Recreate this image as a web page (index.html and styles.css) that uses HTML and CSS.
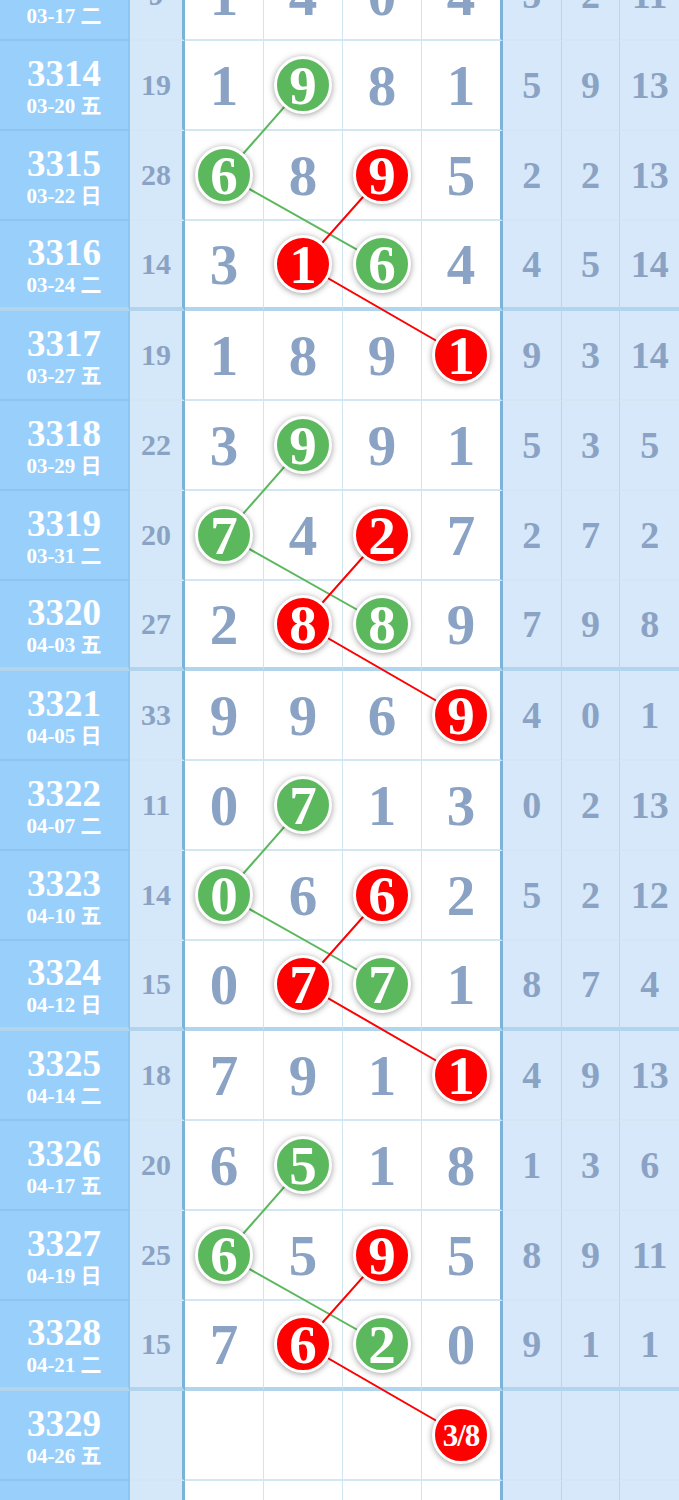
FILE: index.html
```html
<!DOCTYPE html>
<html lang="zh">

<head>
    <meta charset="UTF-8">
    <meta name="viewport" content="width=device-width, initial-scale=1.0">
    <title>走势图</title>
    <link rel="stylesheet" href="styles.css">
</head>

<body>
    <div class="chart">
        <!-- connecting lines, drawn under the balls -->
        <svg class="links" width="679" height="1620">
            <polyline class="green" points="303.5,134 224.5,224 382.5,313" />
            <polyline class="red" points="382.5,224 303.5,313 461,404" />
            <polyline class="green" points="303.5,494 224.5,584 382.5,673" />
            <polyline class="red" points="382.5,584 303.5,673 461,764" />
            <polyline class="green" points="303.5,854 224.5,944 382.5,1033" />
            <polyline class="red" points="382.5,944 303.5,1033 461,1124" />
            <polyline class="green" points="303.5,1214 224.5,1304 382.5,1393" />
            <polyline class="red" points="382.5,1304 303.5,1393 461,1484" />
        </svg>

        <div class="row">
            <div class="issue"><span class="no">3313</span><span class="date">03-17 二</span></div>
            <div class="sum">9</div>
            <div class="num">1</div><div class="num">4</div><div class="num">0</div><div class="num">4</div>
            <div class="stat">5</div><div class="stat">2</div><div class="stat">11</div>
        </div>
        <div class="row">
            <div class="issue"><span class="no">3314</span><span class="date">03-20 五</span></div>
            <div class="sum">19</div>
            <div class="num">1</div><div class="num"><span class="ball green">9</span></div><div class="num">8</div><div class="num">1</div>
            <div class="stat">5</div><div class="stat">9</div><div class="stat">13</div>
        </div>
        <div class="row">
            <div class="issue"><span class="no">3315</span><span class="date">03-22 日</span></div>
            <div class="sum">28</div>
            <div class="num"><span class="ball green">6</span></div><div class="num">8</div><div class="num"><span class="ball red">9</span></div><div class="num">5</div>
            <div class="stat">2</div><div class="stat">2</div><div class="stat">13</div>
        </div>
        <div class="row sep">
            <div class="issue"><span class="no">3316</span><span class="date">03-24 二</span></div>
            <div class="sum">14</div>
            <div class="num">3</div><div class="num"><span class="ball red">1</span></div><div class="num"><span class="ball green">6</span></div><div class="num">4</div>
            <div class="stat">4</div><div class="stat">5</div><div class="stat">14</div>
        </div>
        <div class="row">
            <div class="issue"><span class="no">3317</span><span class="date">03-27 五</span></div>
            <div class="sum">19</div>
            <div class="num">1</div><div class="num">8</div><div class="num">9</div><div class="num"><span class="ball red">1</span></div>
            <div class="stat">9</div><div class="stat">3</div><div class="stat">14</div>
        </div>
        <div class="row">
            <div class="issue"><span class="no">3318</span><span class="date">03-29 日</span></div>
            <div class="sum">22</div>
            <div class="num">3</div><div class="num"><span class="ball green">9</span></div><div class="num">9</div><div class="num">1</div>
            <div class="stat">5</div><div class="stat">3</div><div class="stat">5</div>
        </div>
        <div class="row">
            <div class="issue"><span class="no">3319</span><span class="date">03-31 二</span></div>
            <div class="sum">20</div>
            <div class="num"><span class="ball green">7</span></div><div class="num">4</div><div class="num"><span class="ball red">2</span></div><div class="num">7</div>
            <div class="stat">2</div><div class="stat">7</div><div class="stat">2</div>
        </div>
        <div class="row sep">
            <div class="issue"><span class="no">3320</span><span class="date">04-03 五</span></div>
            <div class="sum">27</div>
            <div class="num">2</div><div class="num"><span class="ball red">8</span></div><div class="num"><span class="ball green">8</span></div><div class="num">9</div>
            <div class="stat">7</div><div class="stat">9</div><div class="stat">8</div>
        </div>
        <div class="row">
            <div class="issue"><span class="no">3321</span><span class="date">04-05 日</span></div>
            <div class="sum">33</div>
            <div class="num">9</div><div class="num">9</div><div class="num">6</div><div class="num"><span class="ball red">9</span></div>
            <div class="stat">4</div><div class="stat">0</div><div class="stat">1</div>
        </div>
        <div class="row">
            <div class="issue"><span class="no">3322</span><span class="date">04-07 二</span></div>
            <div class="sum">11</div>
            <div class="num">0</div><div class="num"><span class="ball green">7</span></div><div class="num">1</div><div class="num">3</div>
            <div class="stat">0</div><div class="stat">2</div><div class="stat">13</div>
        </div>
        <div class="row">
            <div class="issue"><span class="no">3323</span><span class="date">04-10 五</span></div>
            <div class="sum">14</div>
            <div class="num"><span class="ball green">0</span></div><div class="num">6</div><div class="num"><span class="ball red">6</span></div><div class="num">2</div>
            <div class="stat">5</div><div class="stat">2</div><div class="stat">12</div>
        </div>
        <div class="row sep">
            <div class="issue"><span class="no">3324</span><span class="date">04-12 日</span></div>
            <div class="sum">15</div>
            <div class="num">0</div><div class="num"><span class="ball red">7</span></div><div class="num"><span class="ball green">7</span></div><div class="num">1</div>
            <div class="stat">8</div><div class="stat">7</div><div class="stat">4</div>
        </div>
        <div class="row">
            <div class="issue"><span class="no">3325</span><span class="date">04-14 二</span></div>
            <div class="sum">18</div>
            <div class="num">7</div><div class="num">9</div><div class="num">1</div><div class="num"><span class="ball red">1</span></div>
            <div class="stat">4</div><div class="stat">9</div><div class="stat">13</div>
        </div>
        <div class="row">
            <div class="issue"><span class="no">3326</span><span class="date">04-17 五</span></div>
            <div class="sum">20</div>
            <div class="num">6</div><div class="num"><span class="ball green">5</span></div><div class="num">1</div><div class="num">8</div>
            <div class="stat">1</div><div class="stat">3</div><div class="stat">6</div>
        </div>
        <div class="row">
            <div class="issue"><span class="no">3327</span><span class="date">04-19 日</span></div>
            <div class="sum">25</div>
            <div class="num"><span class="ball green">6</span></div><div class="num">5</div><div class="num"><span class="ball red">9</span></div><div class="num">5</div>
            <div class="stat">8</div><div class="stat">9</div><div class="stat">11</div>
        </div>
        <div class="row sep">
            <div class="issue"><span class="no">3328</span><span class="date">04-21 二</span></div>
            <div class="sum">15</div>
            <div class="num">7</div><div class="num"><span class="ball red">6</span></div><div class="num"><span class="ball green">2</span></div><div class="num">0</div>
            <div class="stat">9</div><div class="stat">1</div><div class="stat">1</div>
        </div>
        <div class="row">
            <div class="issue"><span class="no">3329</span><span class="date">04-26 五</span></div>
            <div class="sum"></div>
            <div class="num"></div><div class="num"></div><div class="num"></div><div class="num"><span class="ball red small">3/8</span></div>
            <div class="stat"></div><div class="stat"></div><div class="stat"></div>
        </div>
        <div class="row">
            <div class="issue"><span class="no">3330</span><span class="date">04-28 日</span></div>
            <div class="sum"></div>
            <div class="num"></div><div class="num"></div><div class="num"></div><div class="num"></div>
            <div class="stat"></div><div class="stat"></div><div class="stat"></div>
        </div>
    </div>
</body>

</html>
```

FILE: styles.css
```css
body {
    margin: 0;
    padding: 0;
    background: #ffffff;
    font-family: "Liberation Serif", "Noto Sans CJK SC", serif;
    font-weight: bold;
}

.chart {
    position: relative;
    margin-top: -49px;
    width: 679px;
}

.links {
    position: absolute;
    top: 0;
    left: 0;
    z-index: 1;
    pointer-events: none;
}

.links polyline {
    fill: none;
    stroke-width: 2;
}

.links .green {
    stroke: #5cb85c;
}

.links .red {
    stroke: #ff0000;
}

.row {
    display: grid;
    grid-template-columns: 130px 55px 79px 79px 79px 81px 1fr 1fr 1fr;
    height: 90px;
}

.row > div {
    box-sizing: border-box;
    display: flex;
    align-items: center;
    justify-content: center;
    border-bottom: 2px solid #d2e6f3;
    color: #8aa2c3;
}

.row.sep > div {
    border-bottom: 4px solid #b0d5ed;
}

.row > .issue {
    flex-direction: column;
    background-color: #99cffb;
    border-right: 2px solid #8cc6f1;
    border-bottom-color: #8cc5ef;
    color: #ffffff;
}

.no {
    font-size: 37px;
    line-height: 36px;
    margin-top: 2px;
}

.date {
    font-size: 21px;
    line-height: 22px;
    margin-top: 3px;
}

.sum {
    background-color: #d5e8f9;
    border-right: 3px solid #7ab2d8;
    font-size: 30px;
}

.num {
    background-color: #ffffff;
    border-right: 1px solid #d0e5f2;
    font-size: 57px;
}

.row > .num:nth-child(6) {
    border-right: 3px solid #7ab2d8;
}

.stat {
    background-color: #d6e8f9;
    border-right: 1px solid #b5d8ee;
    font-size: 38px;
}

.stat:last-child {
    border-right: none;
}

.ball {
    position: relative;
    z-index: 2;
    width: 52px;
    height: 52px;
    border: 3px solid #ffffff;
    border-radius: 50%;
    box-shadow: 0 1px 6px rgba(0, 0, 0, 0.4);
    display: flex;
    align-items: center;
    justify-content: center;
    color: #ffffff;
    font-size: 55px;
    line-height: 1;
}

.ball.green {
    background-color: #5cb85c;
}

.ball.red {
    background-color: #ff0000;
}

.ball.small {
    font-size: 31px;
    letter-spacing: -1px;
}
```
